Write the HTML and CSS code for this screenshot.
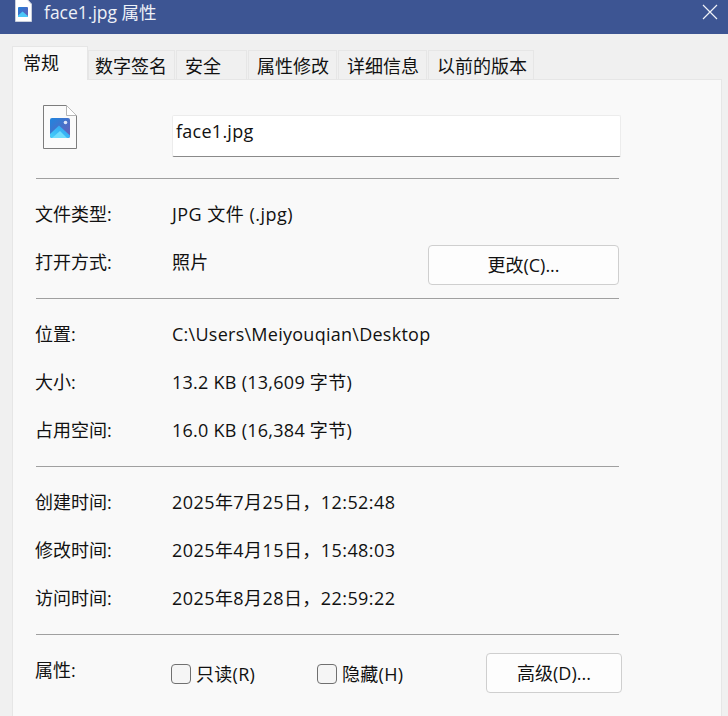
FILE: index.html
```html
<!DOCTYPE html>
<html lang="zh-CN">
<head>
<meta charset="utf-8">
<title>face1.jpg 属性</title>
<link rel="stylesheet" href="styles.css">
</head>
<body>
<header class="titlebar">
  <svg class="title-icon" width="17" height="22" viewBox="0 0 17 22">
    <defs>
      <linearGradient id="tg" x1="0" y1="0" x2="1" y2="1"><stop offset="0" stop-color="#1f7fdc"/><stop offset="1" stop-color="#6a5bb0"/></linearGradient>
    </defs>
    <path d="M0.5 -2H11L16.5 4V21.5H0.5Z" fill="#fff" stroke="#c9cfdc"/>
    <rect x="3" y="7" width="10" height="10" rx="1" fill="url(#tg)"/>
    <path d="M3 15.5 7.5 11.5 13 16V17H3Z" fill="#4cc8f8"/>
  </svg>
  <span class="title-text">face1.jpg 属性</span>
  <svg class="close" width="16" height="16" viewBox="0 0 16 16"><path d="M1 1 15 15M15 1 1 15" stroke="#f0f2f7" stroke-width="1.2" fill="none"/></svg>
</header>
<nav class="tabs">
  <div class="tab active t1">常规</div>
  <div class="tab t2">数字签名</div>
  <div class="tab t3">安全</div>
  <div class="tab t4">属性修改</div>
  <div class="tab t5">详细信息</div>
  <div class="tab t6">以前的版本</div>
</nav>
<main class="panel">
  <section class="head">
    <svg class="file-icon" width="35" height="45" viewBox="0 0 35 45">
      <defs>
        <linearGradient id="g" x1="0" y1="0" x2="1" y2="1"><stop offset="0" stop-color="#1e86e0"/><stop offset="1" stop-color="#6f5cb4"/></linearGradient>
        <linearGradient id="m" x1="0" y1="1" x2="1" y2="0"><stop offset="0" stop-color="#45d0fb"/><stop offset="1" stop-color="#2f9cf0"/></linearGradient>
      </defs>
      <path d="M0.5 0.5H23.5L33.5 10.5V43.5H0.5Z" fill="#fbfbfb" stroke="#7d7d7d"/>
      <path d="M23.5 0.5V10.5H33.5" fill="#fff" stroke="#b5b5b5"/>
      <rect x="7" y="13" width="20" height="20" rx="2" fill="url(#g)"/>
      <circle cx="22.5" cy="17.5" r="1.8" fill="#dfe6f7"/>
      <path d="M7 29 16 20.5 27 30.5V31a2 2 0 0 1-2 2H9a2 2 0 0 1-2-2Z" fill="url(#m)"/>
      <path d="M9 33 17 26 24 33Z" fill="#6fdcfc"/>
    </svg>
    <div class="name-box val">face1.jpg</div>
  </section>
  <hr class="divider">
  <section class="group">
    <div class="row"><span class="label">文件类型:</span><span class="val type">JPG 文件 (.jpg)</span></div>
    <div class="row"><span class="label">打开方式:</span><span class="val">照片</span><button class="btn change">更改(C)...</button></div>
  </section>
  <hr class="divider">
  <section class="group">
    <div class="row"><span class="label">位置:</span><span class="val">C:\Users\Meiyouqian\Desktop</span></div>
    <div class="row"><span class="label">大小:</span><span class="val">13.2 KB (13,609 字节)</span></div>
    <div class="row"><span class="label">占用空间:</span><span class="val">16.0 KB (16,384 字节)</span></div>
  </section>
  <hr class="divider">
  <section class="group">
    <div class="row"><span class="label">创建时间:</span><span class="val date">2025年7月25日，12:52:48</span></div>
    <div class="row"><span class="label">修改时间:</span><span class="val date">2025年4月15日，15:48:03</span></div>
    <div class="row"><span class="label">访问时间:</span><span class="val date">2025年8月28日，22:59:22</span></div>
  </section>
  <hr class="divider">
  <section class="attrs">
    <span class="label attr-label">属性:</span>
    <label class="check first"><span class="box"></span>只读(R)</label>
    <label class="check"><span class="box"></span>隐藏(H)</label>
    <button class="btn advanced">高级(D)...</button>
  </section>
</main>
</body>
</html>
```

FILE: styles.css
```css
* { box-sizing: border-box; }
html, body { margin: 0; height: 716px; overflow: hidden; }
body {
  background: #f0f0f0;
  color: #111;
  font-family: "Open Sans", "Noto Sans CJK SC", sans-serif;
  font-size: 18px;
  line-height: 24px;
}
.val { letter-spacing: 0.26px; }
.val.date { letter-spacing: 0.43px; }
.val.type { letter-spacing: 0.48px; }
.titlebar {
  height: 34px;
  background: #3d5593;
  display: flex;
  align-items: flex-start;
  padding-left: 15px;
  color: #eef1f7;
}
.title-icon { flex: none; }
.title-text { margin-left: 12px; font-size: 17.5px; line-height: 24px; }
.close { margin-left: auto; margin-right: 10px; margin-top: 4px; }
.tabs {
  display: flex;
  align-items: flex-end;
  margin: 12px 0 0 12px;
  height: 33px;
}
.tab {
  height: 29px;
  border: 1px solid #e6e6e6;
  border-bottom: 0;
  background: #f0f0f0;
  padding-left: 8px;
  line-height: 30px;
  margin-right: 1px;
  flex: none;
}
.tab.active {
  height: 34px;
  line-height: 32px;
  background: #f9f9f9;
  margin-bottom: -1px;
  margin-right: 0;
  position: relative;
  z-index: 1;
  padding-left: 10px;
}
.t1 { width: 76px; }
.t2 { width: 87px; padding-left: 6px; }
.t3 { width: 71px; }
.t4 { width: 89px; }
.t5 { width: 89px; }
.t6 { width: 106px; }
.panel {
  margin: 0 6px 0 12px;
  height: 640px;
  background: #f9f9f9;
  border: 1px solid #e6e6e6;
  padding-left: 23px;
}
.head {
  height: 98px;
  position: relative;
  display: flex;
  align-items: flex-start;
  padding-top: 25px;
}
.file-icon { margin-left: 7px; flex: none; }
.name-box {
  width: 449px;
  height: 42px;
  margin-left: 94px;
  margin-top: 10px;
  background: #fff;
  border: 1px solid #ececec;
  border-bottom: 1px solid #8a8a8a;
  border-radius: 2px;
  padding: 3px 3px;
}
.divider {
  width: 583px;
  height: 1px;
  margin: 0;
  border: 0;
  background: #a0a0a0;
}
.group { padding: 11px 0 12px; }
.row {
  width: 583px;
  height: 48px;
  display: flex;
  align-items: center;
  position: relative;
}
.label { width: 137px; margin-left: -1px; flex: none; }
.btn {
  font: inherit;
  color: inherit;
  background: #fdfdfd;
  border: 1px solid #cfcfcf;
  border-radius: 4px;
}
.change {
  position: absolute;
  right: 0;
  top: 7px;
  width: 191px;
  height: 40px;
}
.attrs {
  width: 586px;
  display: flex;
  align-items: flex-start;
  padding-top: 18px;
}
.attr-label { margin-top: 5px; }
.check {
  display: flex;
  align-items: center;
  height: 24px;
  margin-top: 9px;
  letter-spacing: 0.3px;
}
.first { width: 146px; margin-left: -1px; }
.box {
  width: 20px;
  height: 20px;
  border: 1px solid #707070;
  border-radius: 4px;
  background: #f5f5f5;
  margin-right: 5px;
  flex: none;
}
.advanced {
  width: 136px;
  height: 40px;
  margin-left: auto;
}
```
